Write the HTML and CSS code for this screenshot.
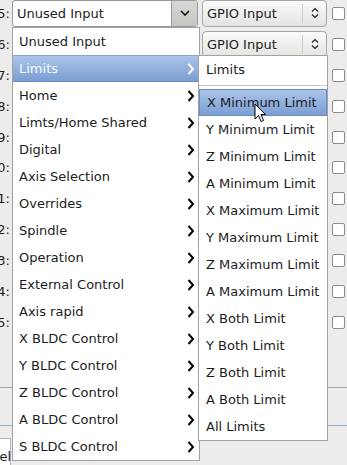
FILE: index.html
```html
<!DOCTYPE html>
<html lang="en">
<head>
    <meta charset="UTF-8">
    <title>Input configuration</title>
    <link rel="stylesheet" href="styles.css">
</head>
<body>

    <div class="rows">
        <div class="row">
            <span class="num">25:</span>
            <div class="combo">
                <span class="combo-text">Unused Input</span>
                <span class="combo-btn">
                    <svg width="10" height="6" viewBox="0 0 10 6"><polyline points="1,1 5,5 9,1" fill="none" stroke="#111" stroke-width="1.6"/></svg>
                </span>
            </div>
            <div class="gpio">
                <span class="gpio-text">GPIO Input</span>
                <span class="gpio-arrows">
                    <svg width="8" height="12" viewBox="0 0 8 12"><polyline points="1,4.5 4,1.5 7,4.5" fill="none" stroke="#222" stroke-width="1.2"/><polyline points="1,7.5 4,10.5 7,7.5" fill="none" stroke="#222" stroke-width="1.2"/></svg>
                </span>
            </div>
            <span class="check"></span>
        </div>
        <div class="row">
            <span class="num">26:</span>
            <span></span>
            <div class="gpio">
                <span class="gpio-text">GPIO Input</span>
                <span class="gpio-arrows">
                    <svg width="8" height="12" viewBox="0 0 8 12"><polyline points="1,4.5 4,1.5 7,4.5" fill="none" stroke="#222" stroke-width="1.2"/><polyline points="1,7.5 4,10.5 7,7.5" fill="none" stroke="#222" stroke-width="1.2"/></svg>
                </span>
            </div>
            <span class="check"></span>
        </div>
        <div class="row"><span class="num">27:</span><span></span><span></span><span class="check"></span></div>
        <div class="row"><span class="num">28:</span><span></span><span></span><span class="check"></span></div>
        <div class="row"><span class="num">29:</span><span></span><span></span><span class="check"></span></div>
        <div class="row"><span class="num">30:</span><span></span><span></span><span class="check"></span></div>
        <div class="row"><span class="num">31:</span><span></span><span></span><span class="check"></span></div>
        <div class="row"><span class="num">32:</span><span></span><span></span><span class="check"></span></div>
        <div class="row"><span class="num">33:</span><span></span><span></span><span class="check"></span></div>
        <div class="row"><span class="num">34:</span><span></span><span></span><span class="check"></span></div>
        <div class="row"><span class="num">35:</span><span></span><span></span><span class="check"></span></div>
    </div>

    <div class="tabs">
        <div class="tab-strip"></div>
        <div class="tab-body">
            <span class="tab-label">Cancel</span>
        </div>
    </div>

    <!-- popup menu opened from the first combo -->
    <div class="menu">
        <div class="item">Unused Input</div>
        <div class="item sub active">Limits <svg class="chev" width="8" height="12" viewBox="0 0 8 12"><polyline points="1.5,1 6,6 1.5,11" fill="none" stroke="#fff" stroke-width="2"/></svg></div>
        <div class="item sub">Home <svg class="chev" width="8" height="12" viewBox="0 0 8 12"><polyline points="1.5,1 6,6 1.5,11" fill="none" stroke="#000" stroke-width="2"/></svg></div>
        <div class="item sub">Limts/Home Shared <svg class="chev" width="8" height="12" viewBox="0 0 8 12"><polyline points="1.5,1 6,6 1.5,11" fill="none" stroke="#000" stroke-width="2"/></svg></div>
        <div class="item sub">Digital <svg class="chev" width="8" height="12" viewBox="0 0 8 12"><polyline points="1.5,1 6,6 1.5,11" fill="none" stroke="#000" stroke-width="2"/></svg></div>
        <div class="item sub">Axis Selection <svg class="chev" width="8" height="12" viewBox="0 0 8 12"><polyline points="1.5,1 6,6 1.5,11" fill="none" stroke="#000" stroke-width="2"/></svg></div>
        <div class="item sub">Overrides <svg class="chev" width="8" height="12" viewBox="0 0 8 12"><polyline points="1.5,1 6,6 1.5,11" fill="none" stroke="#000" stroke-width="2"/></svg></div>
        <div class="item sub">Spindle <svg class="chev" width="8" height="12" viewBox="0 0 8 12"><polyline points="1.5,1 6,6 1.5,11" fill="none" stroke="#000" stroke-width="2"/></svg></div>
        <div class="item sub">Operation <svg class="chev" width="8" height="12" viewBox="0 0 8 12"><polyline points="1.5,1 6,6 1.5,11" fill="none" stroke="#000" stroke-width="2"/></svg></div>
        <div class="item sub">External Control <svg class="chev" width="8" height="12" viewBox="0 0 8 12"><polyline points="1.5,1 6,6 1.5,11" fill="none" stroke="#000" stroke-width="2"/></svg></div>
        <div class="item sub">Axis rapid <svg class="chev" width="8" height="12" viewBox="0 0 8 12"><polyline points="1.5,1 6,6 1.5,11" fill="none" stroke="#000" stroke-width="2"/></svg></div>
        <div class="item sub">X BLDC Control <svg class="chev" width="8" height="12" viewBox="0 0 8 12"><polyline points="1.5,1 6,6 1.5,11" fill="none" stroke="#000" stroke-width="2"/></svg></div>
        <div class="item sub">Y BLDC Control <svg class="chev" width="8" height="12" viewBox="0 0 8 12"><polyline points="1.5,1 6,6 1.5,11" fill="none" stroke="#000" stroke-width="2"/></svg></div>
        <div class="item sub">Z BLDC Control <svg class="chev" width="8" height="12" viewBox="0 0 8 12"><polyline points="1.5,1 6,6 1.5,11" fill="none" stroke="#000" stroke-width="2"/></svg></div>
        <div class="item sub">A BLDC Control <svg class="chev" width="8" height="12" viewBox="0 0 8 12"><polyline points="1.5,1 6,6 1.5,11" fill="none" stroke="#000" stroke-width="2"/></svg></div>
        <div class="item sub">S BLDC Control <svg class="chev" width="8" height="12" viewBox="0 0 8 12"><polyline points="1.5,1 6,6 1.5,11" fill="none" stroke="#000" stroke-width="2"/></svg></div>
    </div>

    <!-- Limits submenu -->
    <div class="submenu">
        <div class="item">Limits</div>
        <div class="separator"></div>
        <div class="item hover">X Minimum Limit</div>
        <div class="item">Y Minimum Limit</div>
        <div class="item">Z Minimum Limit</div>
        <div class="item">A Minimum Limit</div>
        <div class="item">X Maximum Limit</div>
        <div class="item">Y Maximum Limit</div>
        <div class="item">Z Maximum Limit</div>
        <div class="item">A Maximum Limit</div>
        <div class="item">X Both Limit</div>
        <div class="item">Y Both Limit</div>
        <div class="item">Z Both Limit</div>
        <div class="item">A Both Limit</div>
        <div class="item">All Limits</div>
    </div>

    <svg class="cursor" width="13" height="20" viewBox="0 0 13 20">
        <path d="M1,1 L1,16 L4.5,12.5 L7,18.5 L9.5,17.5 L7,11.5 L11.5,11.5 Z" fill="#fff" stroke="#000" stroke-width="1" stroke-linejoin="round"/>
    </svg>

</body>
</html>
```

FILE: styles.css
```css
body {
    font-family: 'DejaVu Sans', 'Liberation Sans', sans-serif;
    font-size: 13px;
    color: #1c1c1c;
    background-color: #edecea;
    margin: 0;
    padding: 0;
    width: 347px;
    height: 465px;
    overflow: hidden;
    position: relative;
}

.rows {
    margin-top: -2px;
}

.row {
    display: grid;
    grid-template-columns: 12px 190px 130px 13px;
    align-items: center;
    height: 30.9px;
}

.num {
    justify-self: end;
    padding-right: 2px;
    white-space: nowrap;
}

.combo {
    width: 186px;
    height: 27px;
    box-sizing: border-box;
    display: flex;
    background-color: #fff;
    border: 1px solid #9a9a9a;
    border-radius: 3px;
    overflow: hidden;
}

.combo-text {
    flex: 1;
    line-height: 25px;
    padding-left: 4px;
}

.combo-btn {
    width: 25px;
    display: flex;
    align-items: center;
    justify-content: center;
    background: linear-gradient(#d8d7d4, #c6c5c1);
    border-left: 1px solid #9a9a9a;
}

.gpio {
    width: 125px;
    height: 27px;
    box-sizing: border-box;
    display: flex;
    align-items: center;
    background: linear-gradient(#fbfbfa, #e4e3e0);
    border: 1px solid #a6a6a6;
    border-radius: 4px;
}

.gpio-text {
    flex: 1;
    padding-left: 4px;
}

.gpio-arrows {
    width: 23px;
    height: 19px;
    display: flex;
    align-items: center;
    justify-content: center;
    border-left: 1px solid #cfcecb;
}

.check {
    width: 13px;
    height: 13px;
    box-sizing: border-box;
    background-color: #fff;
    border: 1px solid #8c8c8c;
    border-radius: 2px;
}

.tabs {
    margin-top: 49px;
    border-top: 1px solid #a4a4a4;
}

.tab-strip {
    height: 37px;
    border-bottom: 1px solid #8fb0dc;
}

.tab-body {
    margin-top: 12px;
    width: 10px;
    height: 27px;
    background-color: #fff;
    border-top: 1px solid #b4b4b4;
    border-right: 1px solid #b4b4b4;
    display: flex;
    justify-content: flex-end;
    align-items: flex-end;
    overflow: visible;
}

.tab-label {
    white-space: nowrap;
    line-height: 18px;
    margin-right: -1px;
}

.menu {
    position: absolute;
    left: 12px;
    top: 27px;
    width: 186px;
    background-color: #fff;
    border: 1px solid #a2a2a2;
}

.submenu {
    position: absolute;
    left: 198px;
    top: 55px;
    width: 128px;
    background-color: #fff;
    border: 1px solid #a2a2a2;
}

.item {
    height: 27px;
    line-height: 27px;
    padding-left: 6px;
    white-space: nowrap;
    box-sizing: border-box;
}

.submenu .item {
    padding-left: 7px;
}

.item.sub {
    display: flex;
    align-items: center;
    justify-content: space-between;
    padding-right: 4px;
}

.item.active {
    color: #f4f7fb;
    background: linear-gradient(#aac5e9, #7c9ed3);
    border-top: 1px solid #86a6d6;
    border-bottom: 1px solid #6a8dc4;
}

.item.hover {
    background: linear-gradient(#aac5e9, #7c9ed3);
    border: 1px solid #6a8dc4;
    line-height: 25px;
}

.separator {
    height: 6px;
    box-sizing: border-box;
    border-top: 2px solid #fff;
    border-bottom: 3px solid #fff;
    background-color: #c8c8c8;
}

.cursor {
    position: absolute;
    left: 254px;
    top: 103px;
}
```
